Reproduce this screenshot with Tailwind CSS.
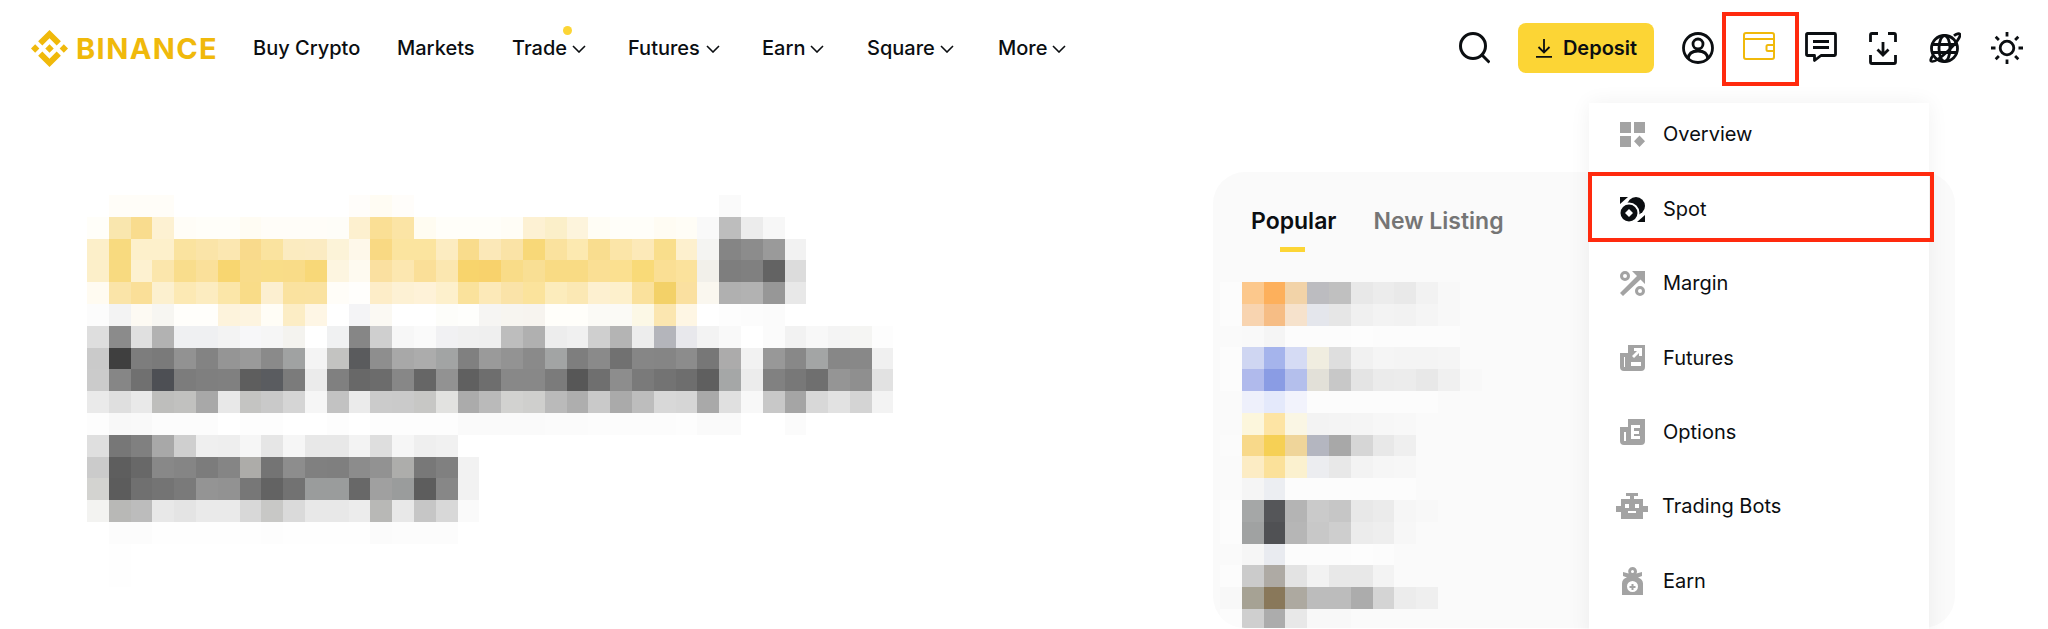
<!DOCTYPE html>
<html lang="en">
<head>
    <meta charset="UTF-8" />
    <title>Binance</title>
    <script src="https://cdn.jsdelivr.net/npm/@tailwindcss/browser@4"></script>
</head>
<body class="h-[629px] overflow-hidden bg-white text-[#0b0e11] font-['Inter',sans-serif]">

    <!-- Top bar -->
    <header class="h-[96px] flex items-center pl-[31px] pr-[25px]">
        <a class="w-[222px] flex items-center gap-[8px] text-[#f0b90b]">
            <svg class="w-[37px] h-[37px]" viewBox="0 0 126.61 126.61" fill="currentColor"><path d="M38.73 53.2l24.59-24.58 24.6 24.6 14.3-14.31L63.32 0 24.42 38.9l14.31 14.3zM0 63.31l14.3-14.31 14.31 14.31-14.31 14.3zM38.73 73.41l24.59 24.59 24.6-24.6 14.31 14.29-38.9 38.91-38.91-38.88v-.03l14.31-14.28zM97.99 63.31l14.3-14.31 14.32 14.31-14.31 14.3zM77.83 63.3L63.32 48.78 52.59 59.51l-1.24 1.23-2.54 2.54 14.51 14.5 14.51-14.47z"/></svg>
            <span class="text-[29px] leading-none font-bold tracking-[1.4px]">BINANCE</span>
        </a>
        <div class="flex items-center text-[20px] font-medium">
            <a class="w-[144px]">Buy Crypto</a>
            <a class="w-[115px]">Markets</a>
            <a class="relative w-[116px] flex items-center gap-[5px]">Trade
                <svg class="w-[14px] h-[8px] mt-[2px]" viewBox="0 0 14 8" fill="none" stroke="currentColor" stroke-width="1.6"><path d="M1 1l6 6 6-6"/></svg>
                <span class="absolute left-[51px] top-[-7px] w-[9px] h-[9px] rounded-full bg-[#fcd535]"></span>
            </a>
            <a class="w-[134px] flex items-center gap-[6px]">Futures
                <svg class="w-[14px] h-[8px] mt-[2px]" viewBox="0 0 14 8" fill="none" stroke="currentColor" stroke-width="1.6"><path d="M1 1l6 6 6-6"/></svg>
            </a>
            <a class="w-[105px] flex items-center gap-[5px]">Earn
                <svg class="w-[14px] h-[8px] mt-[2px]" viewBox="0 0 14 8" fill="none" stroke="currentColor" stroke-width="1.6"><path d="M1 1l6 6 6-6"/></svg>
            </a>
            <a class="w-[131px] flex items-center gap-[5px]">Square
                <svg class="w-[14px] h-[8px] mt-[2px]" viewBox="0 0 14 8" fill="none" stroke="currentColor" stroke-width="1.6"><path d="M1 1l6 6 6-6"/></svg>
            </a>
            <a class="flex items-center gap-[5px]">More
                <svg class="w-[14px] h-[8px] mt-[2px]" viewBox="0 0 14 8" fill="none" stroke="currentColor" stroke-width="1.6"><path d="M1 1l6 6 6-6"/></svg>
            </a>
        </div>

        <div class="ml-auto flex items-center gap-[28px]">
            <!-- search -->
            <svg class="w-[32px] h-[32px]" viewBox="0 0 32 32" fill="none" stroke="currentColor" stroke-width="3"><circle cx="15" cy="14" r="12.500"/><path d="M24.500 23.500l7 7"/></svg>
            <button class="w-[136px] h-[50px] rounded-[8px] bg-[#fcd535] flex items-center justify-center gap-[10px] text-[20px] font-semibold">
                <svg class="w-[18px] h-[20px]" viewBox="0 0 18 20" fill="none" stroke="currentColor" stroke-width="1.8"><path d="M9 1v13M3.500 9L9 14.500 14.500 9M1 18.800h16"/></svg>
                Deposit
            </button>
            <!-- profile -->
            <svg class="w-[32px] h-[32px]" viewBox="0 0 32 32" fill="none" stroke="currentColor" stroke-width="2.800"><circle cx="16" cy="16" r="14.500"/><circle cx="16" cy="12" r="5"/><path d="M6 27c.5-5.500 4-8 10-8s9.500 2.500 10 8"/></svg>
            <div class="relative ml-[1px] flex gap-[30px]">
                <!-- wallet, boxed in red -->
                <div class="relative">
                    <svg class="w-[32px] h-[28px] text-[#f0b90b]" viewBox="0 0 32 28" fill="none" stroke="currentColor" stroke-width="2"><rect x="1" y="1" width="30" height="26" rx="2"/><path d="M1 7h30"/><path d="M31 13h-6a1.500 1.500 0 0 0-1.500 1.500v3a1.500 1.500 0 0 0 1.500 1.500h6"/></svg>
                    <span class="absolute left-[-21px] top-[-20px] w-[77px] h-[74px] border-[4px] border-[#ff2a0e]"></span>
                </div>
                <!-- message -->
                <svg class="w-[32px] h-[30px]" viewBox="0 0 32 30" fill="none" stroke="currentColor" stroke-width="2.800" stroke-linejoin="round"><path d="M2.500 1.500h27a1 1 0 0 1 1 1v20a1 1 0 0 1-1 1H16l-6.500 5v-5h-7a1 1 0 0 1-1-1v-20a1 1 0 0 1 1-1z"/><path d="M8 9.500h16M8 15.500h16"/></svg>
                <!-- download frame -->
                <svg class="w-[32px] h-[33px]" viewBox="0 0 32 33" fill="none" stroke="currentColor" stroke-width="2.800"><path d="M3.500 10V3a1.500 1.500 0 0 1 1.500-1.500h6M21 1.500h6a1.500 1.500 0 0 1 1.500 1.500v7M3.500 23v7A1.500 1.500 0 0 0 5 31.500h22a1.500 1.500 0 0 0 1.500-1.500v-7"/><path d="M16 10v12M10.500 17.500L16 23l5.500-5.500"/></svg>
                <!-- globe -->
                <svg class="w-[32px] h-[32px]" viewBox="0 0 32 32" fill="none" stroke="currentColor" stroke-width="2.800"><circle cx="15.500" cy="16.500" r="13"/><ellipse cx="15.500" cy="16.500" rx="5.500" ry="13"/><path d="M3.500 12.500h24M3.500 20.500h24"/><path d="M25 3.800c2.500-2.200 5-2.600 5.800-1.600 1.400 2-3.800 9.400-11.500 16.500S4.500 30.700 2.200 29.200c-1-.8-.2-3 1.800-5.500"/></svg>
                <!-- theme -->
                <svg class="w-[32px] h-[32px]" viewBox="0 0 32 32" fill="none" stroke="currentColor" stroke-width="2.800"><circle cx="16" cy="16" r="6.800"/><path d="M16 0v4.500M16 27.500V32M0 16h4.500M27.500 16H32M4.700 4.700l3.200 3.200M24.100 24.100l3.200 3.200M4.700 27.300l3.200-3.200M24.100 7.900l3.200-3.200"/></svg>
            </div>
        </div>
    </header>

    <main class="relative flex pt-[76px] pl-[87px]">
        <!-- blurred headline -->
        <div class="w-[1126px] pt-[23px]">
            <div id="heroMosaic" class="grid grid-cols-[repeat(37,21.8px)] auto-rows-[21.8px]"></div>
        </div>

        <!-- markets card, runs behind the dropdown -->
        <section class="w-[742px] h-[456px] rounded-[32px] bg-[#fafafa] pl-[38px] pt-[34px] overflow-hidden">
            <div class="flex gap-[37px] text-[23px] font-semibold leading-[30px]">
                <div class="relative text-[#0b0e11]">Popular
                    <span class="absolute left-[29px] top-[41px] w-[25px] h-[5px] bg-[#fcd535]"></span>
                </div>
                <div class="text-[#757575]">New Listing</div>
            </div>
            <div id="listMosaic" class="mt-[46px] -ml-[31px] grid grid-cols-[repeat(12,21.8px)] auto-rows-[21.8px]"></div>
        </section>

        <!-- wallet dropdown -->
        <nav class="absolute left-[1589px] top-[7px] w-[340px] h-[540px] bg-white shadow-[0_0_20px_rgba(0,0,0,0.06)] text-[20px] text-[#0b0e11]">
            <a class="h-[69px] pb-[7px] flex items-center gap-[18px] pl-[31px]">
                <svg class="w-[25px] h-[25px] text-[#a3a3a3]" viewBox="0 0 25 25" fill="currentColor"><path d="M0 0h11v11H0zM14 0h11v11H14zM0 14h11v11H0zM19.500 13.500l5.500 5.700-5.500 5.800-5.500-5.800z"/></svg>
                Overview
            </a>
            <a class="relative h-[74.300px] flex items-center gap-[18px] pl-[31px]">
                <svg class="w-[25px] h-[25px]" viewBox="0 0 25 25" fill="currentColor"><path d="M0 0h8L0 7zM25 25h-8l8-7z"/><circle cx="16" cy="9" r="9"/><circle cx="9" cy="16" r="9.500" stroke="#fff" stroke-width="2"/><path d="M9 12l4 4-4 4-4-4z" fill="#fff"/></svg>
                Spot
                <span class="absolute left-[-1px] top-[0px] w-[346px] h-[70px] border-[4px] border-[#ff2a0e]"></span>
            </a>
            <a class="h-[74.300px] flex items-center gap-[18px] pl-[31px]">
                <svg class="w-[25px] h-[25px] text-[#a3a3a3]" viewBox="0 0 25 25" fill="currentColor"><path fill-rule="evenodd" d="M5 0a5 5 0 1 1 0 10A5 5 0 0 1 5 0zM5 3a2 2 0 1 0 0 4 2 2 0 0 0 0-4zM20 15a5 5 0 1 1 0 10 5 5 0 0 1 0-10zM20 18a2 2 0 1 0 0 4 2 2 0 0 0 0-4z"/><path d="M12 0h13v13l-4.500-4.500L3 25l-3-3L17 5z"/></svg>
                Margin
            </a>
            <a class="h-[74.300px] flex items-center gap-[18px] pl-[31px]">
                <svg class="w-[25px] h-[26px] text-[#a3a3a3]" viewBox="0 0 25 26" fill="currentColor"><path fill-rule="evenodd" d="M8 0h17v22a4 4 0 0 1-4 4H4a4 4 0 0 1-4-4V8h8zM4 12v10h1V12zM11 17v4h10v-4zM12 11l5-5h-3V3h8v8h-3V8l-5 5z"/></svg>
                Futures
            </a>
            <a class="h-[74.300px] flex items-center gap-[18px] pl-[31px]">
                <svg class="w-[25px] h-[26px] text-[#a3a3a3]" viewBox="0 0 25 26" fill="currentColor"><path fill-rule="evenodd" d="M8 0h17v22a4 4 0 0 1-4 4H4a4 4 0 0 1-4-4V8h8zM4 13v9h2V13zM11 6v14h9v-3h-6v-2h5v-3h-5V9h6V6z"/></svg>
                Options
            </a>
            <a class="h-[74.300px] flex items-center gap-[14px] pl-[27px]">
                <svg class="w-[32px] h-[26px] text-[#a3a3a3]" viewBox="0 0 32 26" fill="currentColor"><path fill-rule="evenodd" d="M10 0h12v3h-4v3h9v7h5v6h-5v7H5v-7H0v-6h5V6h9V3h-4zM9 11v4h4v-4zM19 11v4h4v-4zM12 18v2h8v-2z"/></svg>
                Trading Bots
            </a>
            <a class="h-[74.300px] flex items-center gap-[18px] pl-[31px]">
                <svg class="w-[25px] h-[28px] text-[#a3a3a3]" viewBox="0 0 25 28" fill="currentColor"><path fill-rule="evenodd" d="M12.500 0a4.500 4.500 0 0 1 4.500 4.500c0 .8-.2 1.500-.6 2.100L22 5v4l-4 1.500c3 1 5 3 5 6V28H2V16.500c0-3 2-5.500 5-6L3 9V5l5.600 1.600A4.500 4.500 0 0 1 12.500 0zM12.500 3a1.500 1.500 0 1 0 0 3 1.500 1.500 0 0 0 0-3zM12.500 14a5.500 5.500 0 1 0 0 11 5.500 5.500 0 0 0 0-11z"/><path d="M11.500 17h2v2h2v2h-2v2h-2v-2h-2v-2h2z"/></svg>
                Earn
            </a>
        </nav>
    </main>

    <script>
        // pixelated blocks, one string per row, "-" leaves the cell empty
        const heroRows = [
            "- fffdf8 fffdf8 fffdf8 - - - - - - - - fffdfa fffcf3 fffdfa - - - - - - - - - - - - - - fafafa",
            "fffef9 f9e6ae f9dc8e fdf1d2 fffdf7 fffef9 fffef9 fffcf3 fffdf8 fffdf8 fffdf8 fefdf8 fdf0cf fadf95 fbe4a5 fffcf1 fffef9 fffef9 fffef9 fffdf6 fdf1d3 fbefc9 fdf4dc fffdf5 fffef9 fffef9 fffcf3 fffdf6 f9f9f9 bdbdbd ececec f7f7f7",
            "fcefc9 f8da7f fdf0cb fdf0cb fae39f fae4a8 fbe7b1 f9da8c fae39f fbebc0 fbebc2 fcf3d8 fef8ea f9d983 fbe49f fbe49f fcecc1 f9dc8c fbe8b8 fae3a6 f8d878 fae29e fce9b0 f9dd8f fbe5a8 fce9b8 f9de8c fdf0ce f4f4f2 858585 8c8c8c 9a9a9a f2f2f2",
            "fcefc9 f8da80 fdf1d0 fbe6ac f9dd8c fae09a f8d670 f9dc8a f9dd88 f9dc88 f8d878 fdf5e0 fefaf0 fae0a0 fce7b0 fadf98 fbe7b0 f8d46c f8d26c f9dc88 f9df94 f9db84 f9db84 fadf94 fbe090 f9da78 fadf94 fbe29c f2f0ea 7e7e7e 808080 636363 dcdcdc",
            "fffbf1 fae4a8 fadf98 fcf0cf fce9b4 fcecc0 fbe6a8 f9dc88 fcefd0 fae29f fae2a0 fffdf8 fffefc fdedc8 fdf1d4 fef2d8 fdf0cc fae29c fce9b8 fae3a8 fbe39c fcecbc fbe8b4 fdf0d0 fdf0cc fae19c f3d168 fae0a0 faf7ef b0b0b0 b2b2b2 979797 e8e8e8",
            "fcfcfc f3f3f3 fdfaf3 f7f6f2 fffefb fffefb fdf3dc fdf4e0 fffdf6 fcedc5 fef6e5 ffffff f4f4f6 fbf9f3 ffffff ffffff fdfdfa fefefc f6f5f3 f7f5f0 f7f4ef fffefa fffefa fbfaf6 fbfaf6 fcf8e6 fbe6b0 fef6e4 - fdfdfd fcfcfc fbfbfb",
            "dedede 8b8b8b e0e0e0 b2b2b2 eff0f2 eff0f2 f3f3f3 f7f7f9 f6f6f6 f4f3ef ffffff f0f1f2 868686 cfcfcf f7f7f7 fafafa f1f1f3 f0f0f0 efefef bdbdbd b0b0b0 ededed f0f0f0 cfcfcf b4b4b4 ededed b4b5bb e8e8ec f3f3f3 f9f9f9 ffffff fbfbfb f2f2f2 f8f8f8 f4f4f4 f5f5f3 fdfdfd",
            "cacaca 3f3f3f 7d7d7d 7a7a7a 929292 838383 959595 9a9a9a 8a8a8a a0a2a2 f4f4f4 c3c3c1 5a5b5d 8e8e8e a8a8a8 acacac a2a4a4 808080 9a9a9a 939393 8a8a8a a2a4a4 7e7e7e 8a8a8a 717171 868686 858585 8c8c8c 777777 acabab f2f2f2 989898 888888 a3a5a5 878787 888888 f0f0f0",
            "cbcbcb 868686 707070 4d4f54 7c7c7c 7f7f7f 808080 5e5e5e 5a5c60 7b7b7b ebebeb 808080 686868 6c6c6c 878787 666666 929292 606060 6e6e6e 888888 888888 7b7b7b 575757 6f6f6f 8d8d8d 7a7a7a 737373 6e6e6e 5f5f5f a5a7a7 ececec 818181 787878 6f6f6f 959595 8f8f8f e2e2e2",
            "eaeaea dfdfdf e9e9e9 bebebc c1c1bf a8a8a8 e8e8e8 c4c4c2 c9c9c9 d5d5d5 f6f6f6 c2c2c2 ebebeb cbcbcb cacaca c7c7c5 e2e2e0 ababab bababa d2d2d0 cfcfcd bababa aeaeae c9c9c9 aaaaaa bdbdbd d8d8d8 d6d6d6 a9a9a9 e0e0e0 f8f8f8 c8c8c8 a5a5a5 d8d8d8 e2e2e2 d4d4d4 f3f3f3",
            "fdfdfd f8f8f8 f9f9f9 fcfcfc fcfcfc fcfcfc ffffff fdfdfd fdfdfd ffffff ffffff fdfdfd ffffff fdfdfd fdfdfd fdfdfd fdfdfd fafafa fafafa fafafa fafafa fbfbfb fbfbfb fcfcfc fcfcfc fcfcfc fcfcfc fdfdfd fafafa fafafa - - fbfbfb",
            "dfdfdf 777777 808080 a8a8a8 cfcfcf efefef eeeeee f6f6f6 e6e6e6 f6f6f6 e8e8e8 e8e8e8 f3f3f3 dedede f6f6f6 efefef f1f1f1",
            "cbcbcb 5e5e5e 686868 888888 858585 7c7c7c 858585 adaca9 747474 8d8d8d 808080 7f7f7f 8c8c8c 929292 adadab 787878 808080 f2f2f2",
            "d3d3d0 5c5c5c 707070 747474 7a7a7a 949494 929292 777777 636363 727272 9a9c9c 9a9c9c 686868 a0a0a0 9a9c9c 5d5d5d 878787 f2f2f2",
            "f3f3f1 b8b8b6 bcbcbc e8e8e8 e4e4e4 eaeaea eaeaea d8d8d8 c8c8c6 dadada e8e8e8 e8e8e8 ececec b8b8b6 e8e8e8 c6c6c6 d8d8d8 fafafa",
            "- fcfcfc fcfcfc fefefe fefefe fefefe fefefe fefefe fdfdfd fefefe fefefe fefefe fefefe fbfbfb fcfcfc fcfcfc fcfcfc",
            "- fefefe",
            "- fefefe"
        ];
        const listRows = [
            "fcfcfc fcc88c fdb05c f2d3a8 bcbcc0 c0c0c0 e8e8e8 ececec e9e9e9 f2f2f2 f8f8f8",
            "fcfcfc f8d4b0 f6bd85 f6e2cc e4e6ec e6e6e6 f0f0f0 f3f3f3 f2f2f2 f5f5f5 f8f8f8",
            "- f9f9f9 f5f5f5 fcfcfc fcfcfc fcfcfc fdfdfd fcfcfc fcfcfc fcfcfc fcfcfc",
            "fcfcfc cfd6f2 a5b4ec d5dbf4 f0ede0 dedede f1f1f1 f5f5f5 f4f4f4 f4f4f4 f5f5f5",
            "fcfcfc b0baec 8a9ce4 b4bfec e2e0d8 c8c8c8 e4e4e4 ebebeb ececec e8e8e8 f0f0f0 f8f8f8",
            "- eef0fb e4e9fb f2f3fc fcfcfc fcfcfc fcfcfc fcfcfc fcfcfc fcfcfc",
            "- fcf6dc fde4a4 faf6e4 f3f3f3 f4f4f4 f5f5f5 f7f7f7 f8f8f8",
            "fbfbfb f8d98a f6d055 efd59a b4b6c0 a8a8a8 d6d6d6 e8e8e8 efefef",
            "- fcecc4 fbe19a fbf1cf ecedf0 e8e8e8 f3f3f3 f6f6f6 f7f7f7",
            "- f5f5f5 eceef2 fcfcfc fcfcfc fcfcfc fcfcfc fcfcfc fcfcfc",
            "fcfcfc a5a7a7 555659 b4b4b4 cacaca c6c6c6 e8e8e8 ebebeb f6f6f6 f8f8f8",
            "fcfcfc a0a2a2 505154 b6b6b6 c8c8c8 cecece ececec eeeeee f7f7f7",
            "- f6f6f6 e9ebf0 fcfcfc fcfcfc fcfcfc fdfdfd fcfcfc",
            "fcfcfc cbcbcb aeaaa4 e3e3e3 f2f2f2 e8e8e8 e8e8e8 f3f3f3",
            "f8f8f8 a6a294 89785a ada9a0 bcbcbc bcbcbc acacac d4d4d4 ececec efefef",
            "fcfcfc cfcfcf acacac e8e8e8 f8f8f8 f8f8f8"
        ];

        function fillMosaic(id, rows, cols) {
            const grid = document.getElementById(id);
            rows.forEach(function (row) {
                const cells = row.split(" ");
                for (let i = 0; i < cols; i++) {
                    const cell = document.createElement("div");
                    if (cells[i] && cells[i] !== "-") cell.style.background = "#" + cells[i];
                    grid.appendChild(cell);
                }
            });
        }

        fillMosaic("heroMosaic", heroRows, 37);
        fillMosaic("listMosaic", listRows, 12);
    </script>
</body>
</html>
